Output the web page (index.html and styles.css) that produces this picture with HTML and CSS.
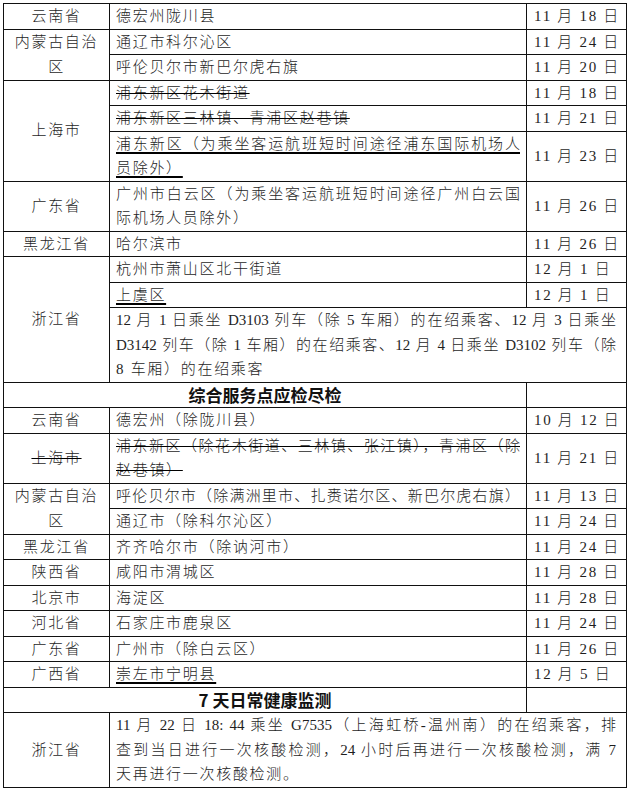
FILE: index.html
```html
<!DOCTYPE html>
<html lang="zh-CN">
<head>
<meta charset="utf-8">
<title>表</title>
<link rel="stylesheet" href="styles.css">
</head>
<body>
<table class="t">
<colgroup><col class="c1"><col class="c2"><col class="c3"></colgroup>
<tr><td class="prov">云南省</td><td class="area">德宏州陇川县</td><td class="date">11 月 18 日</td></tr>
<tr><td class="prov" rowspan="2">内蒙古自治区</td><td class="area">通辽市科尔沁区</td><td class="date">11 月 24 日</td></tr>
<tr><td class="area">呼伦贝尔市新巴尔虎右旗</td><td class="date">11 月 20 日</td></tr>
<tr><td class="prov" rowspan="3">上海市</td><td class="area"><span class="s">浦东新区花木街道</span></td><td class="date">11 月 18 日</td></tr>
<tr><td class="area"><span class="s">浦东新区三林镇、青浦区赵巷镇</span></td><td class="date">11 月 21 日</td></tr>
<tr><td class="area"><span class="ln u">浦东新区（为乘坐客运航班短时间途径浦东国际机场人</span><span class="ln last"><span class="u">员除外）</span></span></td><td class="date">11 月 23 日</td></tr>
<tr><td class="prov">广东省</td><td class="area"><span class="ln">广州市白云区（为乘坐客运航班短时间途径广州白云国</span><span class="ln last">际机场人员除外）</span></td><td class="date">11 月 26 日</td></tr>
<tr><td class="prov">黑龙江省</td><td class="area">哈尔滨市</td><td class="date">11 月 26 日</td></tr>
<tr><td class="prov" rowspan="3">浙江省</td><td class="area">杭州市萧山区北干街道</td><td class="date">12 月 1 日</td></tr>
<tr><td class="area"><span class="u">上虞区</span></td><td class="date">12 月 1 日</td></tr>
<tr><td class="area wide" colspan="2"><span class="ln">12 月 1 日乘坐 D3103 列车（除 5 车厢）的在绍乘客、12 月 3 日乘坐</span><span class="ln">D3142 列车（除 1 车厢）的在绍乘客、12 月 4 日乘坐 D3102 列车（除</span><span class="ln last">8 车厢）的在绍乘客</span></td></tr>
<tr><td class="head" colspan="2">综合服务点应检尽检</td><td class="date"></td></tr>
<tr><td class="prov">云南省</td><td class="area">德宏州（除陇川县）</td><td class="date">10 月 12 日</td></tr>
<tr><td class="prov"><span class="s">上海市</span></td><td class="area"><span class="ln s">浦东新区（除花木街道、三林镇、张江镇），青浦区（除</span><span class="ln last"><span class="s">赵巷镇）</span></span></td><td class="date">11 月 21 日</td></tr>
<tr><td class="prov" rowspan="2">内蒙古自治区</td><td class="area"><span class="ln">呼伦贝尔市（除满洲里市、扎赉诺尔区、新巴尔虎右旗）</span></td><td class="date">11 月 13 日</td></tr>
<tr><td class="area">通辽市（除科尔沁区）</td><td class="date">11 月 24 日</td></tr>
<tr><td class="prov">黑龙江省</td><td class="area">齐齐哈尔市（除讷河市）</td><td class="date">11 月 24 日</td></tr>
<tr><td class="prov">陕西省</td><td class="area">咸阳市渭城区</td><td class="date">11 月 28 日</td></tr>
<tr><td class="prov">北京市</td><td class="area">海淀区</td><td class="date">11 月 28 日</td></tr>
<tr><td class="prov">河北省</td><td class="area">石家庄市鹿泉区</td><td class="date">11 月 24 日</td></tr>
<tr><td class="prov">广东省</td><td class="area">广州市（除白云区）</td><td class="date">11 月 26 日</td></tr>
<tr><td class="prov">广西省</td><td class="area"><span class="u">崇左市宁明县</span></td><td class="date">12 月 5 日</td></tr>
<tr><td class="head" colspan="2">7 天日常健康监测</td><td class="date"></td></tr>
<tr><td class="prov">浙江省</td><td class="area wide" colspan="2"><span class="ln">11 月 22 日 18: 44 乘坐 G7535（上海虹桥-温州南）的在绍乘客，排</span><span class="ln">查到当日进行一次核酸检测，24 小时后再进行一次核酸检测，满 7</span><span class="ln last">天再进行一次核酸检测。</span></td></tr>
</table>
</body>
</html>
```

FILE: styles.css
```css
html, body {
  margin: 0;
  padding: 0;
  background: #fff;
}
body {
  padding: 3px 0 0 3px;
  font-family: "Liberation Serif", "Noto Sans CJK SC", serif;
  color: #1e1e1e;
}
.t {
  border-collapse: collapse;
  table-layout: fixed;
  width: 623px;
}
.c1 { width: 106px; }
.c2 { width: 417px; }
.c3 { width: 100px; }
.t td {
  border: 1px solid #111;
  padding: 0 6px;
  font-size: 15px;
  line-height: 24.5px;
  font-weight: 300;
  letter-spacing: 1.7px;
  vertical-align: middle;
}
.t td.prov {
  text-align: center;
  padding: 0 4px;
}
.t td.area {
  text-align: left;
}
.t td.wide {
  padding-right: 10px;
}
.t td.date {
  padding-left: 7px;
  white-space: nowrap;
}
.t td.head {
  text-align: center;
  font-family: "Noto Sans CJK SC", sans-serif;
  font-size: 17px;
  font-weight: 700;
  letter-spacing: 0;
  color: #111;
}
.ln {
  display: block;
  text-align: justify;
  text-align-last: justify;
  letter-spacing: 0;
  white-space: nowrap;
}
.ln.last {
  text-align-last: left;
  letter-spacing: 1.7px;
}
.u {
  text-decoration: underline;
  text-decoration-thickness: 1.5px;
  text-underline-offset: 3px;
  text-decoration-color: #000;
}
.s {
  text-decoration: line-through;
  text-decoration-thickness: 1px;
  text-decoration-color: #000;
}
```
